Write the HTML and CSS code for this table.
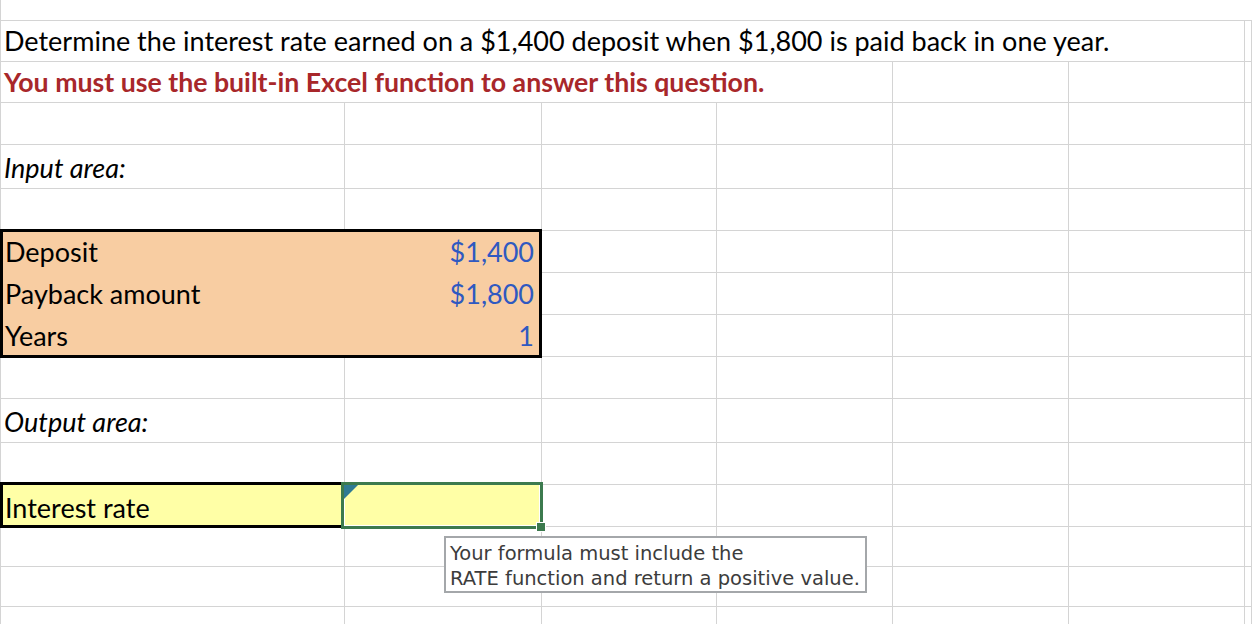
FILE: index.html
```html
<!DOCTYPE html>
<html lang="en">
<head>
<meta charset="utf-8">
<title>Interest rate worksheet</title>
<link rel="stylesheet" href="styles.css">
</head>
<body>
<div class="page">
  <div class="sheet">
    <!-- row 0 -->
    <div class="c full"></div>
    <!-- row 1 -->
    <div class="c span6 title">Determine the interest rate earned on a $1,400 deposit when $1,800 is paid back in one year.</div>
    <div class="c"></div>
    <!-- row 2 -->
    <div class="c span4 warn">You must use the built-in Excel function to answer this question.</div>
    <div class="c"></div><div class="c"></div><div class="c"></div>
    <!-- row 3 -->
    <div class="c"></div><div class="c"></div><div class="c"></div><div class="c"></div><div class="c"></div><div class="c"></div><div class="c"></div>
    <!-- row 4 -->
    <div class="c label">Input area:</div>
    <div class="c"></div><div class="c"></div><div class="c"></div><div class="c"></div><div class="c"></div><div class="c"></div>
    <!-- row 5 -->
    <div class="c"></div><div class="c"></div><div class="c"></div><div class="c"></div><div class="c"></div><div class="c"></div><div class="c"></div>
    <!-- rows 6-8: input block -->
    <div class="input-box">
      <div class="bx-l">Deposit</div><div class="bx-v">$1,400</div>
      <div class="bx-l">Payback amount</div><div class="bx-v">$1,800</div>
      <div class="bx-l last">Years</div><div class="bx-v last">1</div>
    </div>
    <div class="c"></div><div class="c"></div><div class="c"></div><div class="c"></div><div class="c"></div>
    <div class="c"></div><div class="c"></div><div class="c"></div><div class="c"></div><div class="c"></div>
    <div class="c"></div><div class="c"></div><div class="c"></div><div class="c"></div><div class="c"></div>
    <!-- row 9 -->
    <div class="c"></div><div class="c"></div><div class="c"></div><div class="c"></div><div class="c"></div><div class="c"></div><div class="c"></div>
    <!-- row 10 -->
    <div class="c label">Output area:</div>
    <div class="c"></div><div class="c"></div><div class="c"></div><div class="c"></div><div class="c"></div><div class="c"></div>
    <!-- row 11 -->
    <div class="c"></div><div class="c"></div><div class="c"></div><div class="c"></div><div class="c"></div><div class="c"></div><div class="c"></div>
    <!-- row 12 -->
    <div class="out-label">Interest rate</div>
    <div class="selected"><span class="comment-mark"></span><span class="fill-handle"></span></div>
    <div class="c"></div><div class="c"></div><div class="c"></div><div class="c"></div><div class="c"></div>
    <!-- row 13 -->
    <div class="c"></div><div class="c"></div><div class="c"></div><div class="c"></div><div class="c"></div><div class="c"></div><div class="c"></div>
    <!-- row 14 -->
    <div class="c"></div><div class="c"></div><div class="c"></div><div class="c"></div><div class="c"></div><div class="c"></div><div class="c"></div>
    <!-- row 15 -->
    <div class="c"></div><div class="c"></div><div class="c"></div><div class="c"></div><div class="c"></div><div class="c"></div><div class="c"></div>
  </div>
  <div class="tooltip">Your formula must include the<br>RATE function and return a positive value.</div>
</div>
</body>
</html>
```

FILE: styles.css
```css
* { box-sizing: border-box; }

html, body {
  margin: 0;
  padding: 0;
  background: #ffffff;
  overflow: hidden;
}

.page {
  position: relative;
  width: 1252px;
  height: 624px;
  overflow: hidden;
}

.sheet {
  display: grid;
  grid-template-columns: 344px 197px 175px 176px 176px 176px 1fr;
  grid-template-rows: 21px 41px 41px 42px 44px 42px 42px 42px 42px 42px 44px 42px 42px 40px 40px 40px;
  width: 1252px;
  border-left: 1px solid #d4d4d4;
  font-family: Lato, "Liberation Sans", sans-serif;
  font-size: 27px;
  line-height: 1.2;
  color: #000000;
}

.c {
  border-right: 1px solid #d4d4d4;
  border-bottom: 1px solid #d4d4d4;
  display: flex;
  align-items: flex-end;
  padding: 0 3px 4px;
  white-space: nowrap;
  min-width: 0;
}

.full { grid-column: 1 / -1; border-right: none; }
.span6 { grid-column: span 6; }
.span4 { grid-column: span 4; }

.warn {
  color: #a8272a;
  font-weight: 700;
  font-size: 26.7px;
}

.label {
  font-style: italic;
}

.input-box {
  grid-column: 1 / span 2;
  grid-row: 7 / span 3;
  margin: -2px 0 -1px -1px;
  border: 3px solid #000000;
  background: #f8cda2;
  display: grid;
  grid-template-columns: 1fr auto;
  grid-template-rows: 40px 42px 1fr;
  z-index: 1;
}

.bx-l, .bx-v {
  display: flex;
  align-items: flex-end;
  padding-bottom: 4px;
  white-space: nowrap;
}

.bx-l { padding-left: 2px; }

.bx-v {
  justify-content: flex-end;
  padding-right: 5px;
  color: #2f59c1;
}

.bx-l.last, .bx-v.last { padding-bottom: 3px; }

.out-label {
  margin: -3px 0 -1px -1px;
  border: 3px solid #000000;
  background: #ffffa6;
  display: flex;
  align-items: flex-end;
  padding: 0 2px 1px;
  white-space: nowrap;
  z-index: 1;
}

.selected {
  position: relative;
  margin: -3px -1px -2px -4px;
  border: 3px solid #3c7a4e;
  background: #ffffa6;
  box-shadow: inset 1px 0 0 #ffffff, inset -1px 0 0 #ffffff, inset 0 -1px 0 #ffffff;
  z-index: 2;
}

.comment-mark {
  position: absolute;
  left: 0;
  top: 0;
  width: 14px;
  height: 14px;
  background: #2f7a93;
  clip-path: polygon(0 0, 100% 0, 0 100%);
}

.fill-handle {
  position: absolute;
  left: 193px;
  top: 38px;
  width: 8px;
  height: 8px;
  background: #3c7a4e;
  border: 1px solid #ffffff;
  box-sizing: content-box;
  margin: -1px 0 0 -1px;
}

.tooltip {
  position: absolute;
  left: 444px;
  top: 536px;
  width: 423px;
  height: 57px;
  border: 2px solid #a4a7aa;
  background: #ffffff;
  padding: 3px 0 0 4px;
  font-family: "DejaVu Sans", Verdana, sans-serif;
  font-size: 19.5px;
  line-height: 25px;
  color: #3c3c3c;
  white-space: nowrap;
  z-index: 3;
}
```
